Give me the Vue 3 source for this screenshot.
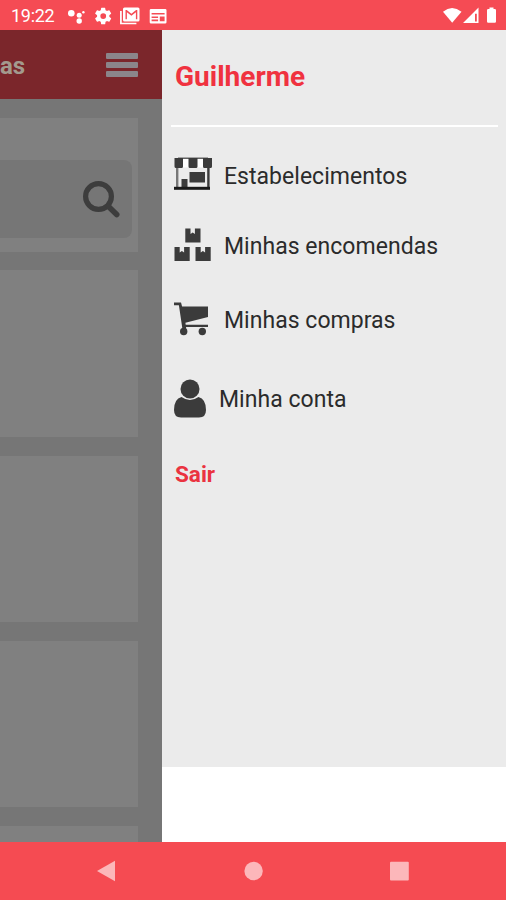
<script setup>
const menu = [
  { id: 'store', label: 'Estabelecimentos' },
  { id: 'boxes', label: 'Minhas encomendas' },
  { id: 'cart', label: 'Minhas compras' },
  { id: 'user', label: 'Minha conta' },
]
</script>

<template>
  <div class="phone">
    <header class="status">
      <span class="clock">19:22</span>
      <svg class="status-left" width="100" height="20" viewBox="0 0 100 20" fill="#fff">
        <circle cx="3.300" cy="7.200" r="3.300" /><circle cx="11.200" cy="9.200" r="2.500" /><circle cx="11.200" cy="15" r="2.700" /><circle cx="15.400" cy="6.200" r="1.200" />
        <g transform="translate(25.400 .200) scale(.82)">
          <path fill-rule="evenodd" d="M19.4 13a7.500 7.500 0 0 0 0-2l2.100-1.700a.5.5 0 0 0 .1-.6l-2-3.500a.5.5 0 0 0-.6-.2l-2.500 1a7 7 0 0 0-1.700-1l-.4-2.600a.5.5 0 0 0-.5-.4h-4a.5.5 0 0 0-.5.4L9 5a7 7 0 0 0-1.700 1l-2.500-1a.5.5 0 0 0-.6.200l-2 3.500a.5.500 0 0 0 .1.600L4.500 11a7.500 7.500 0 0 0 0 2l-2.200 1.700a.5.5 0 0 0-.1.600l2 3.500c.1.200.4.300.6.200l2.500-1a7 7 0 0 0 1.700 1l.4 2.600c0 .2.200.4.500.4h4c.3 0 .5-.2.500-.4l.4-2.600a7 7 0 0 0 1.700-1l2.500 1c.2.100.5 0 .6-.2l2-3.500a.5.5 0 0 0-.1-.6zM12 15.500a3.500 3.500 0 1 1 0-7 3.500 3.500 0 0 1 0 7z" />
        </g>
        <path transform="translate(-1 0)" fill-rule="evenodd" d="M57.500 1.500H71q1.500 0 1.500 1.500V14q0 1.500-1.500 1.500H57.500Q56 15.500 56 14V3Q56 1.500 57.500 1.500zM58.500 4v9.300h1.400V6.300l4.500 3.500 4.500-3.500v7h1.400V4h-1.200l-4.700 3.800L59.700 4z" />
        <path d="M52.900 5v12.500h15.500" fill="none" stroke="#fff" stroke-width="1.700" />
        <path fill-rule="evenodd" d="M83 3h14.200q1.300 0 1.300 1.300v11.900q0 1.300-1.300 1.300H83q-1.300 0-1.300-1.300V4.300Q81.700 3 83 3zM83.600 7v1.600h13V7zM83.600 10.500v1.500h6.500v-1.500zM83.600 13.600v1.600h6.500v-1.600zM91.800 10.500v4.700h4.800v-4.700z" />
      </svg>
      <svg class="status-right" width="56" height="20" viewBox="0 0 56 20" fill="#fff">
        <path d="M1 5.700Q10-1.600 19.500 5.700L10.200 16.800z" />
        <path fill-rule="evenodd" d="M21 17L36.500 1.500V17zM33 7.800v7.700h1.800V7.800z" />
        <path d="M47.500 3V1.500h4V3h1.300q1.200 0 1.200 1.200v11.400q0 1.200-1.200 1.200h-6.600q-1.200 0-1.200-1.200V4.200Q45 3 46.200 3z" />
      </svg>
    </header>

    <div class="body">
      <section class="page">
        <div class="topbar">
          <span class="title">as</span>
          <div class="burger"><i></i><i></i><i></i></div>
        </div>
        <div class="cards">
          <div class="card search-card">
            <div class="search">
              <svg width="38" height="40" viewBox="0 0 38 40" fill="none" stroke="#3d3d3d">
                <circle cx="16.500" cy="17.500" r="12.900" stroke-width="5.200" />
                <path d="M26.500 27.500L34.700 35.500" stroke-width="5.600" stroke-linecap="round" />
              </svg>
            </div>
          </div>
          <div class="card tall"></div>
          <div class="card mid"></div>
          <div class="card mid"></div>
          <div class="card tall"></div>
        </div>
      </section>

      <aside class="drawer">
        <div class="panel">
          <h1>Guilherme</h1>
          <hr />
          <nav>
            <a v-for="m in menu" :key="m.id" class="item" :class="m.id">
              <svg v-if="m.id === 'store'" width="38" height="34" viewBox="0 0 38 34" fill="#3b3b3b">
                <rect x="2" y="9" width="2.400" height="21" fill="#777" /><rect x="33.200" y="9" width="2.400" height="21" />
                <path d="M9 1h6v9.500H9zM23 1h6.500v9.500H23z" fill="#fff" />
                <path d="M.5 1H9v8.500q0 1.500-1.500 1.500H2Q.5 11 .5 9.500zM14.500 1h9v8.500q0 1.500-1.500 1.500h-6q-1.500 0-1.500-1.500zM29 1h9v8.500Q38 11 36.500 11h-6Q29 11 29 9.500z" />
                <path d="M4 .600h30v1.200H4z" />
                <rect x="15.500" y="15" width="15.500" height="10.500" /><rect x="7.500" y="22" width="6" height="8" />
                <rect x="0" y="29.800" width="36" height="3" fill="#191919" />
              </svg>
              <svg v-else-if="m.id === 'boxes'" width="38" height="34" viewBox="0 0 38 34" fill="#3b3b3b">
                <path d="M11.300 .500h5.200v5.500l2.200-1.400L20.900 6V.500H26.500v14H11.300zM.5 19h5.200v5.500l2.200-1.400 2.200 1.400V19h5.600v14H.5zM21.500 19h5.200v5.500l2.200-1.400 2.200 1.400V19h5.600v14H21.500z" />
              </svg>
              <svg v-else-if="m.id === 'cart'" width="38" height="34" viewBox="0 0 38 34" fill="#3b3b3b">
                <path d="M0 .500h7l1.100 3.900H34v10.500L11.400 20.700l.3 2H34v2.200H12l.3 3H8.600L4.900 3.200H0z" />
                <circle cx="9.700" cy="29.500" r="3.700" /><circle cx="28.300" cy="29.500" r="3.700" />
              </svg>
              <svg v-else width="32" height="39" viewBox="0 0 32 39" fill="#3b3b3b">
                <circle cx="16" cy="10" r="9.500" />
                <path d="M7.500 18Q16 24 24.500 18 32 20 32 31q0 7.500-7 7.500H7Q0 38.500 0 31 0 20 7.500 18z" />
              </svg>
              <span>{{ m.label }}</span>
            </a>
          </nav>
          <a class="logout">Sair</a>
        </div>
      </aside>
    </div>

    <footer class="sysnav">
      <svg width="506" height="58" viewBox="0 0 506 58" fill="#fcb7ba">
        <path d="M97 29L115 18.800v20.400z" />
        <circle cx="253.600" cy="29" r="9.200" />
        <rect x="390" y="19.700" width="18.800" height="18.800" rx="1" />
      </svg>
    </footer>
  </div>
</template>

<style>
body { margin: 0; background: #fff; }
</style>

<style scoped>
.phone { width: 506px; height: 900px; display: flex; flex-direction: column; overflow: hidden; font-family: Roboto, sans-serif; }
.status { height: 30px; flex: none; background: #f54b54; display: flex; align-items: center; color: #fff; box-sizing: border-box; padding: 1px 8px 0 11px; }
.clock { font-size: 18px; line-height: 20px; width: 57px; letter-spacing: -0.3px; }
.status-right { margin-left: auto; }
.body { flex: 1; min-height: 0; display: flex; }
.page { width: 162px; overflow: hidden; background: #767676; display: flex; flex-direction: column; }
.topbar { height: 69px; flex: none; background: #7b262b; display: flex; align-items: center; justify-content: space-between; padding-right: 24px; }
.title { color: #a39a8e; font-weight: 700; font-size: 24px; line-height: 28px; padding-top: 2px; }
.burger { display: flex; flex-direction: column; gap: 3.500px; padding-top: 1px; }
.burger i { width: 32px; height: 5.500px; background: #8b858a; border-radius: 1px; }
.cards { display: flex; flex-direction: column; gap: 19px; padding: 19px 24px 0 0; }
.card { background: #808080; flex: none; }
.search-card { height: 134px; box-sizing: border-box; padding: 42px 6px 0 0; margin-bottom: -1px; }
.search { height: 78px; box-sizing: border-box; background: #767676; border-radius: 0 8px 8px 0; display: flex; align-items: center; justify-content: flex-end; padding-right: 12px; }
.tall { height: 167px; }
.mid { height: 166px; }
.drawer { flex: 1; background: #fff; }
.panel { height: 737px; background: #ebebeb; box-sizing: border-box; padding: 29px 8px 0 9px; }
h1 { margin: 0 0 0 4px; color: #f0323f; font-size: 28px; line-height: 36px; font-weight: 700; letter-spacing: 0; }
hr { border: 0; height: 2px; background: #fff; margin: 30px 0 0; }
nav { display: flex; flex-direction: column; padding: 12px 0 0 3px; }
.item { display: flex; align-items: center; height: 72px; color: #2b2b2b; font-size: 23px; gap: 12px; letter-spacing: 0.03px; }
.item span { white-space: nowrap; padding-top: 2px; }
.store { height: 70px; }
.store span { padding-top: 4px; }
.boxes { height: 72px; }
.cart { height: 76px; }
.user { height: 82px; gap: 13px; }
.logout { display: block; margin: 20px 0 0 4px; color: #ea3340; font-weight: 700; font-size: 22.500px; line-height: 30px; }
.sysnav { height: 58px; flex: none; background: #f54b52; }
.sysnav svg { display: block; }
</style>
